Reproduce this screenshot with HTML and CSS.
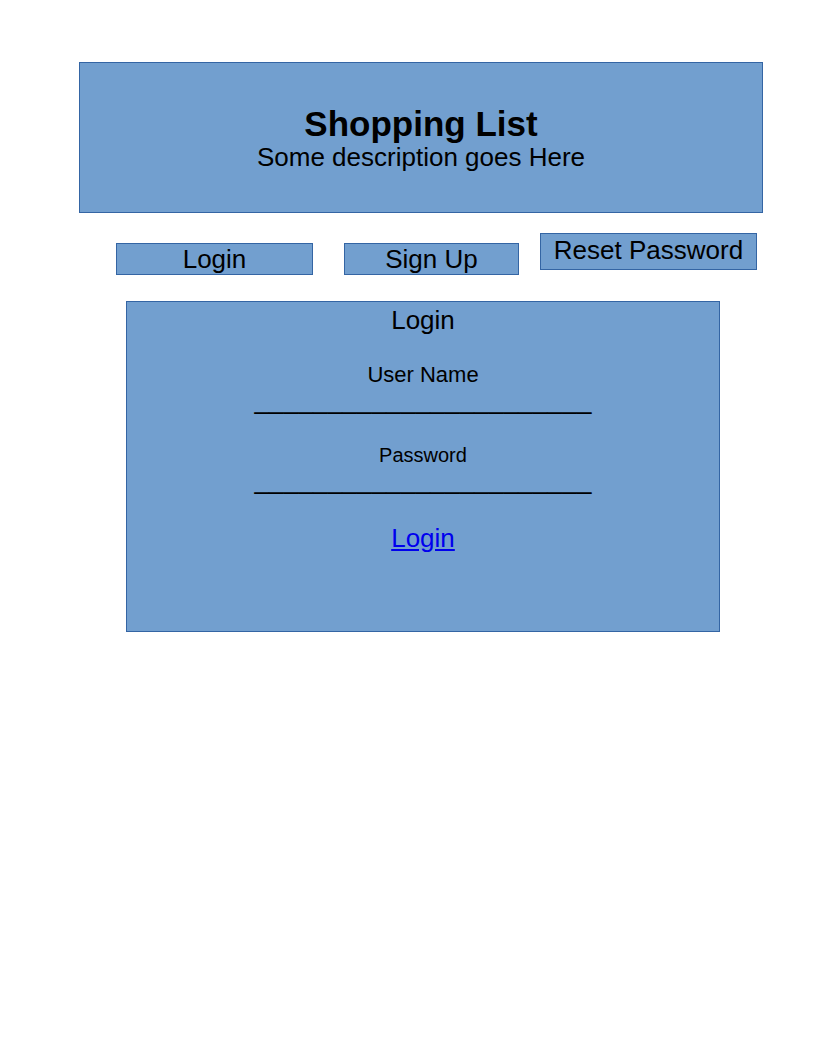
FILE: index.html
```html
<!DOCTYPE html>
<html>
<head>
    <title>Shopping List</title>
    <link rel="stylesheet" href="styles.css">
</head>
<body>
    <div class="header">
        <h1>Shopping List</h1>
        <p>Some description goes Here</p>
    </div>

    <div class="tabs">
        <div class="tab tab-login">Login</div>
        <div class="tab tab-signup">Sign Up</div>
        <div class="tab tab-reset">Reset Password</div>
    </div>

    <div class="panel">
        <h2>Login</h2>
        <div class="label label-user">User Name</div>
        <div class="blank">_______________________</div>
        <div class="label label-pass">Password</div>
        <div class="blank">_______________________</div>
        <a class="submit" href="#">Login</a>
    </div>
</body>
</html>
```

FILE: styles.css
```css
body { margin: 0; font-family: "Liberation Sans", Arial, sans-serif; color: #000; background: #fff; }
.header { margin: 62px 0 0 79px; width: 682px; padding: 42px 0 41px; background: #729fcf; border: 1px solid #3465a4; text-align: center; }
.header h1 { margin: 0; font-size: 35px; line-height: 38px; font-weight: bold; }
.header p { margin: 0; font-size: 26px; line-height: 28px; }
.tabs { display: flex; align-items: flex-start; margin-top: 20px; padding-left: 116px; }
.tab { background: #729fcf; border: 1px solid #3465a4; text-align: center; font-size: 26px; }
.tab-login { width: 195px; height: 30px; line-height: 30px; margin-top: 10px; }
.tab-signup { width: 173px; height: 30px; line-height: 30px; margin-top: 10px; margin-left: 31px; }
.tab-reset { width: 215px; height: 35px; line-height: 32px; margin-left: 21px; }
.panel { margin: 26px 0 0 126px; width: 592px; height: 329px; background: #729fcf; border: 1px solid #3465a4; text-align: center; }
.panel h2 { margin: 3px 0 0; font-size: 26px; line-height: 30px; font-weight: normal; }
.label-user { margin-top: 27px; font-size: 22px; line-height: 26px; }
.label-pass { margin-top: 31px; font-size: 20px; line-height: 24px; }
.blank { font-size: 26px; line-height: 24px; letter-spacing: 0.2px; margin-top: 0; }
.label-pass + .blank { margin-top: 1px; }
.submit { display: inline-block; margin-top: 31px; font-size: 26px; line-height: 30px; color: #0000ee; text-decoration: underline; }
```
